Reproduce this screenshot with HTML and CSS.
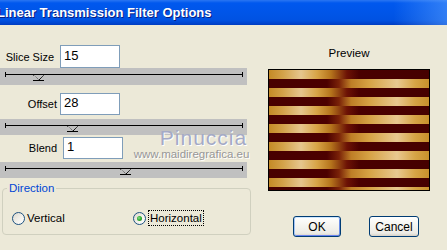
FILE: index.html
```html
<!DOCTYPE html>
<html lang="en">
<head>
    <meta charset="UTF-8">
    <meta name="viewport" content="width=device-width, initial-scale=1.0">
    <title>Linear Transmission Filter Options</title>
    <link rel="stylesheet" href="styles.css">
</head>
<body>
    <div class="window">
        <div class="titlebar">
            <span class="title">Linear Transmission Filter Options</span>
        </div>
        <div class="client">
            <div class="controls">
                <div class="field field-slice">
                    <label for="sliceSize">Slice Size</label>
                    <input id="sliceSize" class="edit" type="text" value="15">
                </div>
                <div class="slider slider-slice">
                    <div class="track"></div>
                    <span class="thumb" style="left: 38px"></span>
                </div>
                <div class="field field-offset">
                    <label for="offset">Offset</label>
                    <input id="offset" class="edit" type="text" value="28">
                </div>
                <div class="slider slider-offset">
                    <div class="track"></div>
                    <span class="thumb" style="left: 72px"></span>
                </div>
                <div class="field field-blend">
                    <label for="blend">Blend</label>
                    <input id="blend" class="edit" type="text" value="1">
                </div>
                <div class="slider slider-blend">
                    <div class="track"></div>
                    <span class="thumb" style="left: 125px"></span>
                </div>
                <fieldset class="group">
                    <legend>Direction</legend>
                    <div class="radios">
                        <span class="radio radio-vertical">
                            <span class="radio-dot"></span>
                            <span class="radio-text">Vertical</span>
                        </span>
                        <span class="radio radio-horizontal checked">
                            <span class="radio-dot"></span>
                            <span class="radio-text focus">Horizontal</span>
                        </span>
                    </div>
                </fieldset>
            </div>
            <div class="side">
                <div class="preview-label">Preview</div>
                <div class="preview">
                    <div class="stripe gold"></div>
                    <div class="stripe dark"></div>
                    <div class="stripe gold"></div>
                    <div class="stripe dark"></div>
                    <div class="stripe gold"></div>
                    <div class="stripe dark"></div>
                    <div class="stripe gold"></div>
                    <div class="stripe dark"></div>
                    <div class="stripe gold"></div>
                    <div class="stripe dark"></div>
                    <div class="stripe gold"></div>
                    <div class="stripe dark"></div>
                    <div class="stripe gold"></div>
                    <div class="stripe dark"></div>
                </div>
                <div class="buttons">
                    <a class="button default" href="javascript:void(0)">OK</a>
                    <a class="button" href="javascript:void(0)">Cancel</a>
                </div>
            </div>
            <div class="watermark">
                <span class="wm-name">Pinuccia</span>
                <span class="wm-site">www.maidiregrafica.eu</span>
            </div>
        </div>
    </div>
</body>
</html>
```

FILE: styles.css
```css
html {
    box-sizing: border-box;
}
*, *::before, *::after {
    box-sizing: inherit;
}
body {
    margin  : 0;
    width   : 447px;
    height  : 250px;
    overflow: hidden;

    font-family     : "Liberation Sans", Arial, sans-serif;
    font-size       : 11px;
    color           : #000;
    background-color: #ECE9D8;
}
.window {
    width : 447px;
    height: 250px;
}

/* title bar */
.titlebar {
    height     : 25px;
    display    : flex;
    align-items: center;
    overflow   : hidden;

    background:
        linear-gradient(to right, rgba(90, 160, 255, 0) 88%, rgba(90, 160, 255, 0.55) 100%),
        linear-gradient(to bottom, #2A76F2 0%, #0058EE 12%, #0055E8 50%, #0052E2 80%, #0046D0 92%, #003CC0 100%);
}
.title {
    margin-left: -3px;
    white-space: nowrap;

    color      : #FFF;
    font-family: "Liberation Sans", Arial, sans-serif;
    font-weight: bold;
    font-size  : 13px;
    text-shadow: 1px 1px 0 #0A1E80;
}

/* client area */
.client {
    position: relative;
    height  : 225px;
    display : flex;
}
.controls {
    width         : 251px;
    display       : flex;
    flex-direction: column;
}
.field {
    display    : flex;
    align-items: center;
    height     : 23px;
}
.field label {
    text-align: right;
}
.field-slice {
    margin-top: 20px;
}
.field-slice label {
    width       : 54px;
    margin-right: 6px;
}
.field-offset {
    margin-top: 8px;
    height    : 22px;
}
.field-offset label {
    width       : 57px;
    margin-right: 3px;
}
.field-blend {
    margin-top: 2px;
    height    : 22px;
}
.field-blend label {
    width       : 57px;
    margin-right: 6px;
}
.edit {
    width  : 60px;
    height : 100%;
    margin : 0;
    padding: 1px 3px 4px;

    font-family     : "Liberation Sans", Arial, sans-serif;
    font-size       : 13px;
    border          : 1px solid #7F9DB9;
    background-color: #FFF;
    outline         : none;
}

/* sliders */
.slider {
    position        : relative;
    width           : 247px;
    height          : 17px;
    background-color: #C0C0C0;
}
.slider-offset {
    margin-top: 4px;
    height    : 16px;
}
.slider-blend {
    margin-top: 3px;
    height    : 16px;
}
.track {
    position   : relative;
    margin     : 6px 4px 0 5px;
    height     : 1px;
    background : #000;
}
.track::before,
.track::after {
    content   : "";
    position  : absolute;
    top       : -2px;
    width     : 1px;
    height    : 5px;
    background: #000;
}
.track::before {
    left: 0;
}
.track::after {
    right: 0;
}
.thumb {
    position   : absolute;
    top        : 7px;
    width      : 11px;
    height     : 6px;
    margin-left: -5px;

    background: linear-gradient(to top right, transparent 49%, #000 50%, transparent 60%) left / 50% 100% no-repeat,
                linear-gradient(to top left, transparent 49%, #000 50%, transparent 60%) right / 50% 100% no-repeat;
    border-bottom: 1px solid #000;
}

/* group box */
.group {
    margin       : 4px 0 0 2px;
    padding      : 0;
    width        : 249px;
    height       : 53px;
    border       : 1px solid #D0D0BF;
    border-radius: 4px;
}
.group legend {
    margin-left: 4px;
    padding    : 0 2px;
    color      : #0046D5;
    font-size  : 11.5px;
}
.radios {
    display    : flex;
    align-items: center;
    margin-top : 16px;
}
.radio {
    display    : flex;
    align-items: center;
    font-size  : 11.5px;
}
.radio-vertical {
    margin-left: 9px;
    width      : 121px;
}
.radio-dot {
    position     : relative;
    width        : 13px;
    height       : 13px;
    margin-right : 2px;
    border       : 1px solid #1C5180;
    border-radius: 50%;
    background   : linear-gradient(135deg, #DCD8CC 0%, #F4F3EE 60%, #FFF 100%);
}
.checked .radio-dot::after {
    content      : "";
    position     : absolute;
    left         : 3px;
    top          : 3px;
    width        : 5px;
    height       : 5px;
    border-radius: 50%;
    background   : radial-gradient(circle at 40% 40%, #8BE08B 0%, #2DAA2D 50%, #1A8A1A 100%);
}
.radio-text.focus {
    padding: 1px 1px;
    border : 1px dotted #000;
}

/* right side */
.side {
    flex          : 1;
    display       : flex;
    flex-direction: column;
}
.preview-label {
    margin-top : 22px;
    margin-left: 17px;
    width      : 162px;
    text-align : center;
    font-size  : 11.5px;
}
.preview {
    margin-top    : 10px;
    margin-left   : 17px;
    width         : 162px;
    height        : 122px;
    border        : 1px solid #000;
    overflow      : hidden;
    display       : flex;
    flex-direction: column;
}
.stripe {
    flex  : none;
    height: 9px;
}
.gold {
    background: linear-gradient(to right,
        #C48A26 0px, #D3A24A 14px, #E6C68E 32px, #D8A446 48px,
        #B5741C 62px, #6C1205 78px, #4A0000 90px, #460000 160px);
}
.dark {
    background: linear-gradient(to right,
        #480000 0px, #4C0000 58px, #7A2208 70px, #BE7E26 82px,
        #D6A244 100px, #E8C890 128px, #D6A446 146px, #C8902C 160px);
}
.buttons {
    display    : flex;
    margin-top : 25px;
    margin-left: 42px;
    gap        : 28px;
}
.button {
    display        : flex;
    align-items    : center;
    justify-content: center;
    height         : 21px;
    width          : 50px;

    color          : #000;
    font-size      : 12px;
    text-decoration: none;
    border         : 1px solid #003C74;
    border-radius  : 3px;
    background     : linear-gradient(to bottom, #FFFFFF 0%, #F4F3EE 50%, #ECEBE6 85%, #D6D0C5 100%);
}
.button.default {
    width     : 48px;
    box-shadow: inset 0 1px 0 #CEE7FF, inset 1px 0 0 #A6C4F4, inset -1px 0 0 #6B8DE6, inset 0 -1px 0 #6982EE;
}

/* watermark over the dialog */
.watermark {
    position      : absolute;
    left          : 133px;
    top           : 103px;
    width         : 117px;
    display       : flex;
    flex-direction: column;
    align-items   : center;
    pointer-events: none;
}
.wm-name {
    margin-left   : 24px;
    line-height   : 20px;
    color         : #A4AAC6;
    font-size     : 21px;
    letter-spacing: 1px;
    text-shadow   : 1px 1px 0 #FFF;
}
.wm-site {
    line-height: 12px;
    white-space: nowrap;
    color      : #979797;
    font-size  : 11.5px;
    text-shadow: 1px 1px 0 #FFF;
}
```
